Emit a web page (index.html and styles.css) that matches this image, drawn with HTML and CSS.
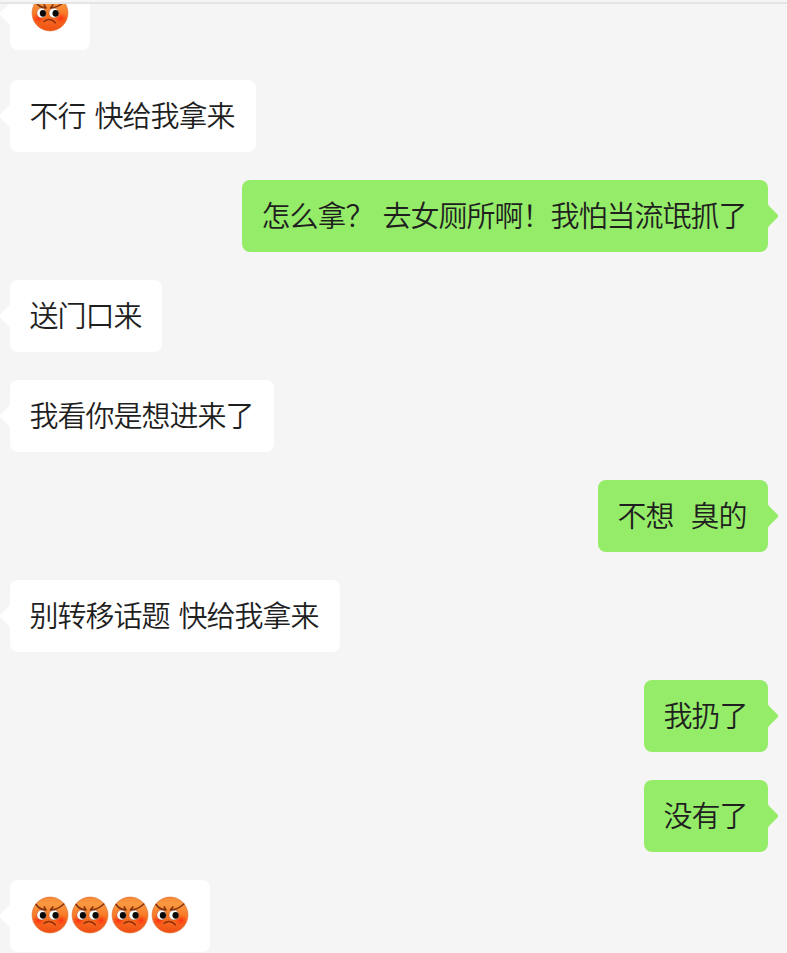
FILE: index.html
```html
<!DOCTYPE html>
<html lang="zh-CN">
<head>
<meta charset="utf-8">
<title>聊天</title>
<link rel="stylesheet" href="styles.css">
</head>
<body>
<svg class="defs" aria-hidden="true">
  <defs>
    <linearGradient id="skin" x1="0" y1="0" x2="0" y2="1">
      <stop offset="0" stop-color="#f58a38"/>
      <stop offset=".2" stop-color="#fa983f"/>
      <stop offset=".55" stop-color="#f87525"/>
      <stop offset="1" stop-color="#f04e12"/>
    </linearGradient>
    <radialGradient id="blush">
      <stop offset="0" stop-color="#ff2b12" stop-opacity=".9"/>
      <stop offset="1" stop-color="#ff3b12" stop-opacity="0"/>
    </radialGradient>
    <symbol id="angry" viewBox="0 0 40 40">
      <circle cx="20" cy="20" r="17.9" fill="url(#skin)" stroke="#df6a2c" stroke-width=".7"/>
      <ellipse cx="8.500" cy="25.500" rx="6.500" ry="5.500" fill="url(#blush)"/>
      <ellipse cx="31" cy="25.500" rx="6.500" ry="5.500" fill="url(#blush)"/>
      <ellipse cx="11.500" cy="20" rx="4.600" ry="4.900" fill="#fff" stroke="#8c3a16" stroke-width=".4"/>
      <ellipse cx="23.900" cy="20" rx="4.900" ry="4.900" fill="#fff" stroke="#8c3a16" stroke-width=".4"/>
      <ellipse cx="12.900" cy="20.300" rx="3.100" ry="3.400" fill="#080808"/>
      <ellipse cx="25.600" cy="20.300" rx="3.100" ry="3.400" fill="#080808"/>
      <path d="M6.200 9.500C8 12.700 11 14.700 16 14.900L14.200 11.900M33.800 9C30 12.700 26 14.900 20.500 14.900L22.800 11.900" fill="none" stroke="#803410" stroke-width="1.600" stroke-linecap="round" stroke-linejoin="round"/>
      <path d="M14 28.500C17 25.500 22 25.700 25.300 29.800" fill="none" stroke="#8e2d0c" stroke-width="1.500" stroke-linecap="round"/>
    </symbol>
    <symbol id="tail" viewBox="0 0 11 26">
      <path d="M0 0C0 1.600.5 2.500 1.500 3.500L9.500 11.500Q11 13 9.500 14.500L1.500 22.500C.5 23.500 0 24.400 0 26Z" fill="currentColor"/>
    </symbol>
  </defs>
</svg>
<main class="chat">
  <div class="bubble them stickers first"><svg class="tail"><use href="#tail"/></svg><svg class="emoji"><use href="#angry"/></svg></div>
  <div class="bubble them spaced"><svg class="tail"><use href="#tail"/></svg>不行<span class="gap"> </span>快给我拿来</div>
  <div class="bubble me spaced"><svg class="tail"><use href="#tail"/></svg>怎么拿？<span class="gap"> </span>去女厕所啊！我怕当流氓抓了</div>
  <div class="bubble them"><svg class="tail"><use href="#tail"/></svg>送门口来</div>
  <div class="bubble them"><svg class="tail"><use href="#tail"/></svg>我看你是想进来了</div>
  <div class="bubble me spaced"><svg class="tail"><use href="#tail"/></svg>不想<span class="gap double"> </span>臭的</div>
  <div class="bubble them spaced"><svg class="tail"><use href="#tail"/></svg>别转移话题<span class="gap"> </span>快给我拿来</div>
  <div class="bubble me"><svg class="tail"><use href="#tail"/></svg>我扔了</div>
  <div class="bubble me"><svg class="tail"><use href="#tail"/></svg>没有了</div>
  <div class="bubble them stickers"><svg class="tail"><use href="#tail"/></svg><svg class="emoji"><use href="#angry"/></svg><svg class="emoji"><use href="#angry"/></svg><svg class="emoji"><use href="#angry"/></svg><svg class="emoji"><use href="#angry"/></svg></div>
</main>
<div class="topline"></div>
</body>
</html>
```
FILE: styles.css
```css
body {
  margin: 0;
  background: #f5f5f5;
}

.defs {
  position: absolute;
  width: 0;
  height: 0;
}

.chat {
  box-sizing: border-box;
  height: 953px;
  overflow: hidden;
  padding: 0 19px 0 10px;
  display: flex;
  flex-direction: column;
  gap: 28px;
  font: 350 29px/68px "Noto Sans CJK SC", sans-serif;
  letter-spacing: -1px;
  color: #1f1f1f;
}

.bubble {
  position: relative;
  box-sizing: border-box;
  display: flex;
  flex: none;
  align-items: flex-start;
  height: 72px;
  padding: 0 20.5px 0 19.5px;
  border-radius: 8px;
  white-space: pre;
}

.spaced {
  padding-right: 21.5px;
}

.stickers {
  padding: 0 20px;
}

.first {
  margin: -22px 0 2px;
}

.them {
  align-self: flex-start;
  background: #fff;
}

.me {
  align-self: flex-end;
  background: #95ec69;
}

.gap {
  width: 9px;
}

.double {
  width: 17px;
}

.tail {
  position: absolute;
  top: 23px;
  width: 11px;
  height: 26px;
}

.them .tail {
  right: 100%;
  color: #fff;
  transform: scaleX(-1);
}

.me .tail {
  left: 100%;
  color: #95ec69;
}

.emoji {
  width: 40px;
  height: 40px;
  margin-top: 15px;
}

.topline {
  position: absolute;
  top: 0;
  left: 0;
  width: 100%;
  height: 2px;
  background: #f5f5f5;
  border-bottom: 2px solid #e5e5e5;
}
```
